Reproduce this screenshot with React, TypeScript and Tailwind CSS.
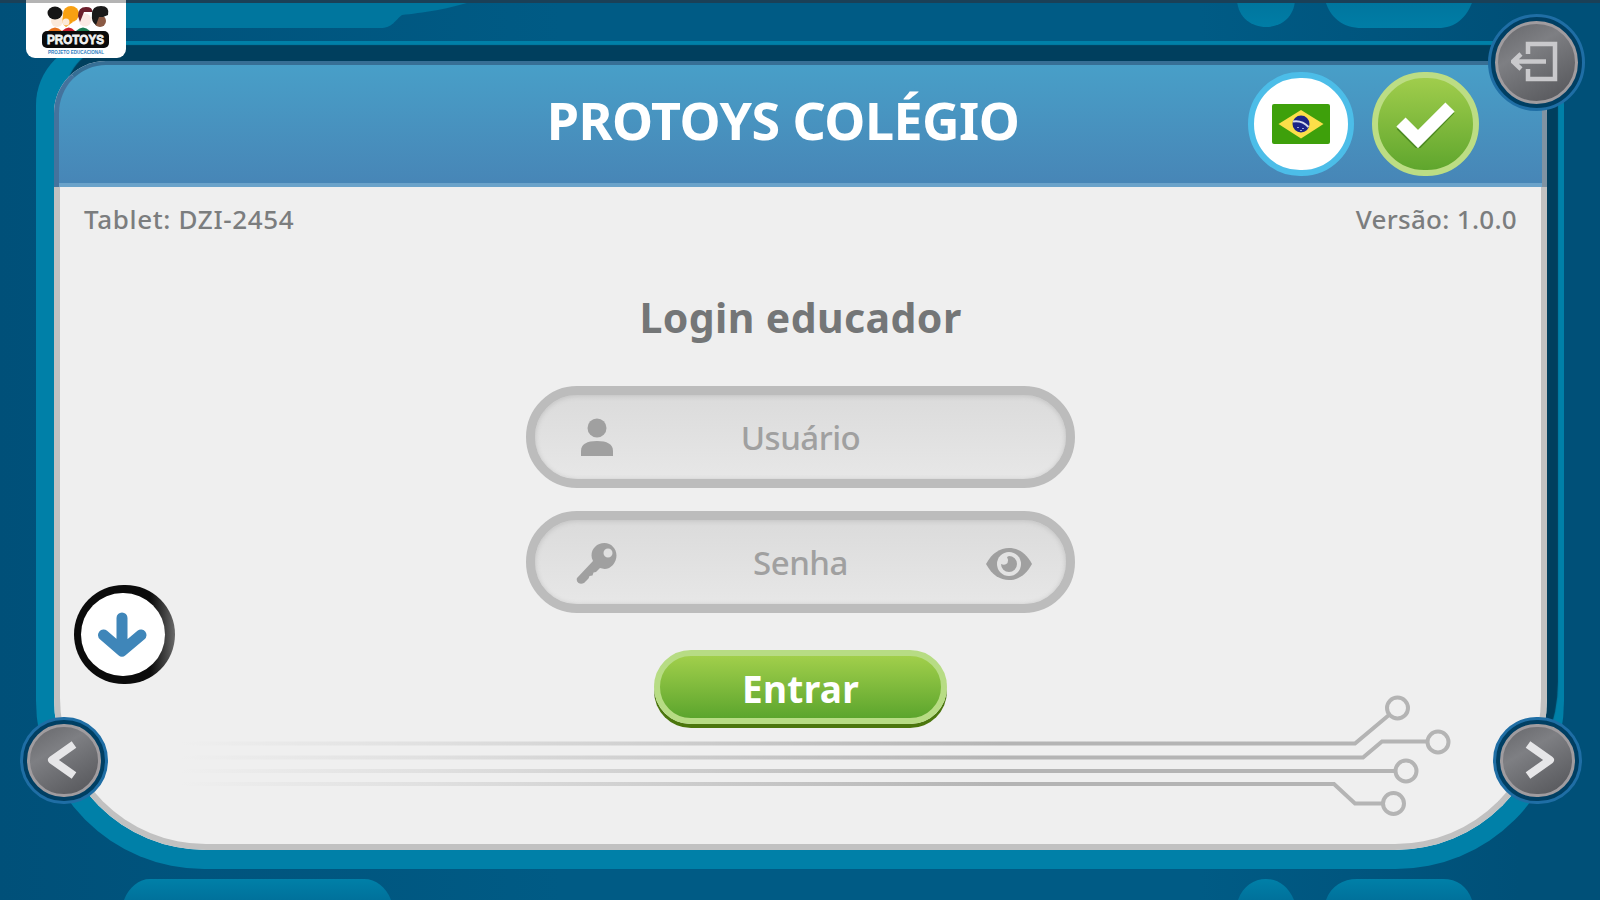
import type { ReactNode } from 'react';

const BackgroundShapes = () => (
    <svg className="absolute inset-0" width="1600" height="900" viewBox="0 0 1600 900">
        <defs>
            <linearGradient id="bg" x1="0" x2="1" y1="0" y2="0">
                <stop offset="0" stopColor="#005079" />
                <stop offset="0.35" stopColor="#005b85" />
                <stop offset="0.75" stopColor="#005b85" />
                <stop offset="0.95" stopColor="#005078" />
            </linearGradient>
            <linearGradient id="shape" x1="0" x2="0" y1="0" y2="1">
                <stop offset="0" stopColor="#00759d" />
                <stop offset="1" stopColor="#007da6" />
            </linearGradient>
            <linearGradient id="shapeLow" x1="0" x2="0" y1="0" y2="1">
                <stop offset="0" stopColor="#0080a8" />
                <stop offset="1" stopColor="#00719b" />
            </linearGradient>
        </defs>
        <rect width="1600" height="900" fill="url(#bg)" />
        <path d="M100 0H475C452 9 420 13 402 15C395 20 393 28 380 28H100Z" fill="#00769e" />
        <path d="M1237 0H1295C1294 18 1280 27 1266 27S1238 18 1237 0Z" fill="url(#shape)" />
        <path d="M1325 0H1473C1467 18 1455 28 1438 28H1362C1343 28 1330 18 1325 0Z" fill="url(#shape)" />
        <path d="M124 900C129 887 139 879 150 879H364C376 879 386 887 391 900Z" fill="url(#shapeLow)" />
        <path d="M1238 900C1243 886 1254 879 1266 879S1288 886 1294 900Z" fill="url(#shapeLow)" />
        <path d="M1326 900C1331 886 1343 879 1357 879H1443C1457 879 1467 886 1472 900Z" fill="url(#shapeLow)" />
        <rect width="1600" height="3" fill="#1b4057" />
    </svg>
);

const Logo = () => (
    <div className="absolute left-[26px] top-0 h-[58px] w-[100px] rounded-b-[9px] bg-white">
        <div className="h-[3px] bg-[#b4b4b4]" />
        <svg className="absolute left-0 top-0" width="100" height="58" viewBox="0 0 100 58">
            <path d="M22 31Q29 24 36 31Z" fill="#e8731c" />
            <path d="M36 31Q43 24 49 31Z" fill="#c81f2d" />
            <path d="M50 31Q57 24 64 31Z" fill="#1c7d54" />
            <circle cx="31" cy="21" r="6" fill="#fbe9d8" />
            <ellipse cx="29" cy="13" rx="7.500" ry="6.500" fill="#151515" />
            <circle cx="45" cy="14" r="8" fill="#f8a012" />
            <path d="M37 14Q35 25 40 27L47 22Z" fill="#f8a012" />
            <circle cx="40" cy="22" r="3.500" fill="#fbe9d8" />
            <circle cx="59" cy="20" r="6.500" fill="#fbe9e4" />
            <path d="M52 16Q52 7 60 7Q67 7 66 12L58 12L54 22Z" fill="#6b1f2c" />
            <circle cx="74" cy="21" r="6" fill="#8a5a44" />
            <path d="M66 14Q66 6 75 6Q84 6 82 15L77 17L73 17L70 25Q65 22 66 14Z" fill="#1a1a1a" />
            <rect x="16" y="31" width="67" height="17" rx="5" fill="#0b0b0b" />
            <text x="21" y="44" textLength="57" lengthAdjust="spacingAndGlyphs" fontFamily="Liberation Sans" fontWeight="900" fontSize="13" fill="#f2f2f2" stroke="#f2f2f2" strokeWidth="0.800">PROTOYS</text>
            <text x="22" y="53.500" textLength="56" lengthAdjust="spacingAndGlyphs" fontFamily="Liberation Sans" fontWeight="700" fontSize="5" fill="#2c7ec0">PROJETO EDUCACIONAL</text>
        </svg>
    </div>
);

const RoundButton = ({ className, children }: { className: string; children: ReactNode }) => (
    <button className={`absolute flex items-center justify-center rounded-full border-[3px] border-[#1f6ea5] bg-[#003f63] ${className}`}>
        <span className="flex h-full w-full items-center justify-center rounded-full border-[3px] border-[#a09c9f] bg-linear-150 from-[#66676b] via-[#7e7f83] via-35% to-[#535458]">
            {children}
        </span>
    </button>
);

const Chevron = ({ flip = false }: { flip?: boolean }) => (
    <svg className={flip ? '-scale-x-100' : ''} width="44" height="48" viewBox="0 0 44 48" fill="none">
        <path d="M32 7.500L10 23L32 38.500" stroke="#e6e6e8" strokeWidth="8" strokeLinejoin="round" />
    </svg>
);

const BrazilFlag = () => (
    <svg width="58" height="40" viewBox="0 0 58 40">
        <rect width="58" height="40" rx="2" fill="#3ea00b" />
        <path d="M6.500 20L29 6L51.500 20L29 34.500Z" fill="#fbdf49" />
        <circle cx="29" cy="20" r="8.500" fill="#1c2487" />
        <path d="M21 17.500Q30 16 36.500 23" stroke="#d5daee" strokeWidth="2" fill="none" />
        <path d="M25 23.500h2M30 24.500h2M28 26.500h2" stroke="#9ba2d6" strokeWidth="1.200" />
    </svg>
);

const Circuit = () => (
    <svg className="absolute top-[629px] left-[106px]" width="1320" height="130" viewBox="160 690 1320 130" fill="none">
        <defs>
            <linearGradient id="trace" gradientUnits="userSpaceOnUse" x1="180" x2="1000" y1="0" y2="0">
                <stop offset="0" stopColor="#b4b4b4" stopOpacity="0" />
                <stop offset="0.300" stopColor="#b4b4b4" stopOpacity="0.250" />
                <stop offset="1" stopColor="#b4b4b4" />
            </linearGradient>
        </defs>
        <g stroke="url(#trace)" strokeWidth="4">
            <path d="M170 743.500H1355L1389 715" />
            <path d="M170 757.500H1363L1382 741.500H1427" />
            <path d="M170 771H1394" />
            <path d="M170 784H1334L1355 803.500H1382" />
        </g>
        <g stroke="#b4b4b4" strokeWidth="4">
            <circle cx="1397.500" cy="708" r="10.500" />
            <circle cx="1438" cy="742" r="10.500" />
            <circle cx="1406" cy="771" r="10.500" />
            <circle cx="1393.500" cy="803.500" r="10.500" />
        </g>
    </svg>
);

const Field = ({ label, icon, action }: { label: string; icon: ReactNode; action?: ReactNode }) => (
    <div className="grid h-[102px] w-[549px] grid-cols-[100px_1fr_100px] items-center rounded-full border-[9px] border-[#bcbcbc] bg-linear-to-b from-[#dbdbdb] to-[#e7e7e7] shadow-[inset_0_1px_5px_#c2c2c2]">
        <span className="flex justify-center pt-[2px] pl-[24px]">{icon}</span>
        <span className="text-center text-[33px] leading-none font-medium tracking-[-0.5px] text-[#a0a0a0]">{label}</span>
        <span className="flex justify-center pt-[3px] pr-[15px]">{action}</span>
    </div>
);

const UserIcon = () => (
    <svg width="34" height="40" viewBox="0 0 34 40" fill="#a0a0a0">
        <ellipse cx="17" cy="10" rx="9.500" ry="9.500" />
        <path d="M1 38V33C1 26 7 23 17 23S33 26 33 33V38Z" />
    </svg>
);

const KeyIcon = () => (
    <svg width="42" height="42" viewBox="0 0 42 42">
        <path fillRule="evenodd" fill="#a0a0a0" d="M28.500 1C35 1 40.500 6.500 40.500 13.500S35 27 28.500 27L24 26L20 30L17.500 30.500L16.500 33.500L13.500 34L12.500 36.500L8 41Q5 42.500 2.500 41Q0 39 1 36L17 19Q15.500 16.500 15.500 13.500C15.500 6.500 21 1 28.500 1ZM32 6.500A4.500 4.500 0 1 0 32 15.500A4.500 4.500 0 1 0 32 6.500Z" />
    </svg>
);

const EyeIcon = () => (
    <svg width="48" height="34" viewBox="0 0 48 34">
        <path d="M1 17C7 6 15 1 24 1S41 6 47 17C41 28 33 33 24 33S7 28 1 17Z" fill="#a0a0a0" />
        <circle cx="24" cy="17" r="12" fill="#e3e3e3" />
        <path d="M24 9A8 8 0 1 1 16 17Q20 19 22.500 16Q24 13 22 10Z" fill="#a0a0a0" />
    </svg>
);

export default function App() {
    return (
        <div className="relative h-[900px] w-[1600px] overflow-hidden bg-[#005079] px-9 pt-[41px] font-['Noto_Sans',sans-serif]">
            <BackgroundShapes />

            {/* Tablet frame */}
            <div className="relative h-[828px] w-[1528px] rounded-t-[64px] rounded-b-[168px] bg-[#0080a8] pt-[20px] pl-[18px]">
                <main className="relative flex h-[789px] w-[1493px] flex-col rounded-t-[52px] rounded-b-[152px] bg-[#efefef] shadow-[11px_-16px_1px_#003f5e]">
                    <header className="relative flex h-[126px] items-center rounded-t-[52px] border-x-[5px] border-t-[4px] border-[#44739d] border-t-[#376f95] border-r-[#7f93a3] bg-linear-to-b from-[#489fc8] to-[#4785b6] shadow-[inset_0_-4px_0_#6ba3ca]">
                        <h1 className="ml-[484px] flex w-[480px] justify-center pb-[13px] text-[52px] leading-none font-bold tracking-[-0.55px] whitespace-nowrap text-white">PROTOYS COLÉGIO</h1>
                        <div className="ml-[225px] flex gap-[18px] pb-[4px]">
                            <button className="flex h-[104px] w-[106px] items-center justify-center rounded-full border-[6px] border-[#4cbde8] bg-white">
                                <BrazilFlag />
                            </button>
                            <button className="flex h-[104px] w-[107px] items-center justify-center rounded-full border-[6px] border-[#bcdd84] bg-linear-to-b from-[#a0cd4c] to-[#5fa62d]">
                                <svg width="60" height="48" viewBox="0 0 60 48">
                                    <path d="M5 24L22 41L54 8" fill="none" stroke="#4d8b23" strokeWidth="12" transform="translate(0 1)" />
                                    <path d="M5 22L22 39L54 7" fill="none" stroke="#fff" strokeWidth="13" />
                                </svg>
                            </button>
                        </div>
                    </header>

                    <section className="flex flex-1 flex-col items-center rounded-b-[152px] border-x-[6px] border-b-[6px] border-[#c1c1c1]">
                        <div className="flex w-full justify-between pt-[17px] pr-[24px] pl-[24px] text-[26px] leading-[30px] font-medium text-[#7b7d7e]">
                            <span className="tracking-[0.65px]">Tablet: DZI-2454</span>
                            <span className="tracking-[0.3px]">Versão: 1.0.0</span>
                        </div>
                        <h2 className="mt-[59px] text-[41px] leading-[48px] font-bold tracking-[0.4px] text-[#747677]">Login educador</h2>
                        <div className="mt-[45px] flex flex-col gap-[23px]">
                            <Field label="Usuário" icon={<UserIcon />} />
                            <Field label="Senha" icon={<KeyIcon />} action={<EyeIcon />} />
                        </div>
                        <button className="mt-[37px] flex h-[74px] w-[293px] items-center justify-center rounded-full border-[6px] border-[#b7dc84] bg-linear-to-b from-[#a1cf4b] to-[#5ba52d] pt-[3px] text-[37px] leading-none font-bold tracking-[0.3px] text-white shadow-[0_4px_0_#4b760d]">
                            Entrar
                        </button>
                    </section>
                    <Circuit />
                </main>
            </div>

            <Logo />

            {/* Floating controls */}
            <button className="absolute top-[585px] left-[74px] flex h-[99px] w-[101px] rounded-full bg-linear-to-r from-[#0b0b0b] from-75% to-[#6a6a6a] pt-[8px] pl-[7px]">
                <span className="flex h-[83px] w-[84px] items-center justify-center rounded-full bg-white">
                    <svg width="52" height="48" viewBox="0 0 52 48" fill="none" stroke="#3f86b9" strokeWidth="11" strokeLinecap="round" strokeLinejoin="round">
                        <path d="M25 7V38M6.500 24L25 40L44 24" />
                    </svg>
                </span>
            </button>
            <RoundButton className="top-[717px] left-[20px] h-[87px] w-[88px] p-[4px]">
                <Chevron />
            </RoundButton>
            <RoundButton className="top-[717px] left-[1493px] h-[87px] w-[89px] p-[4px]">
                <Chevron flip />
            </RoundButton>
            <RoundButton className="top-[14px] left-[1488px] h-[97px] w-[97px] p-[4px]">
                <svg width="52" height="44" viewBox="0 0 52 44" fill="none" stroke="#c9c9cc" strokeWidth="4.500">
                    <path d="M17 13V3H44V38H17V28" />
                    <path d="M35 20.500H3M10 13L2 20.500L10 28" />
                </svg>
            </RoundButton>
        </div>
    );
}
